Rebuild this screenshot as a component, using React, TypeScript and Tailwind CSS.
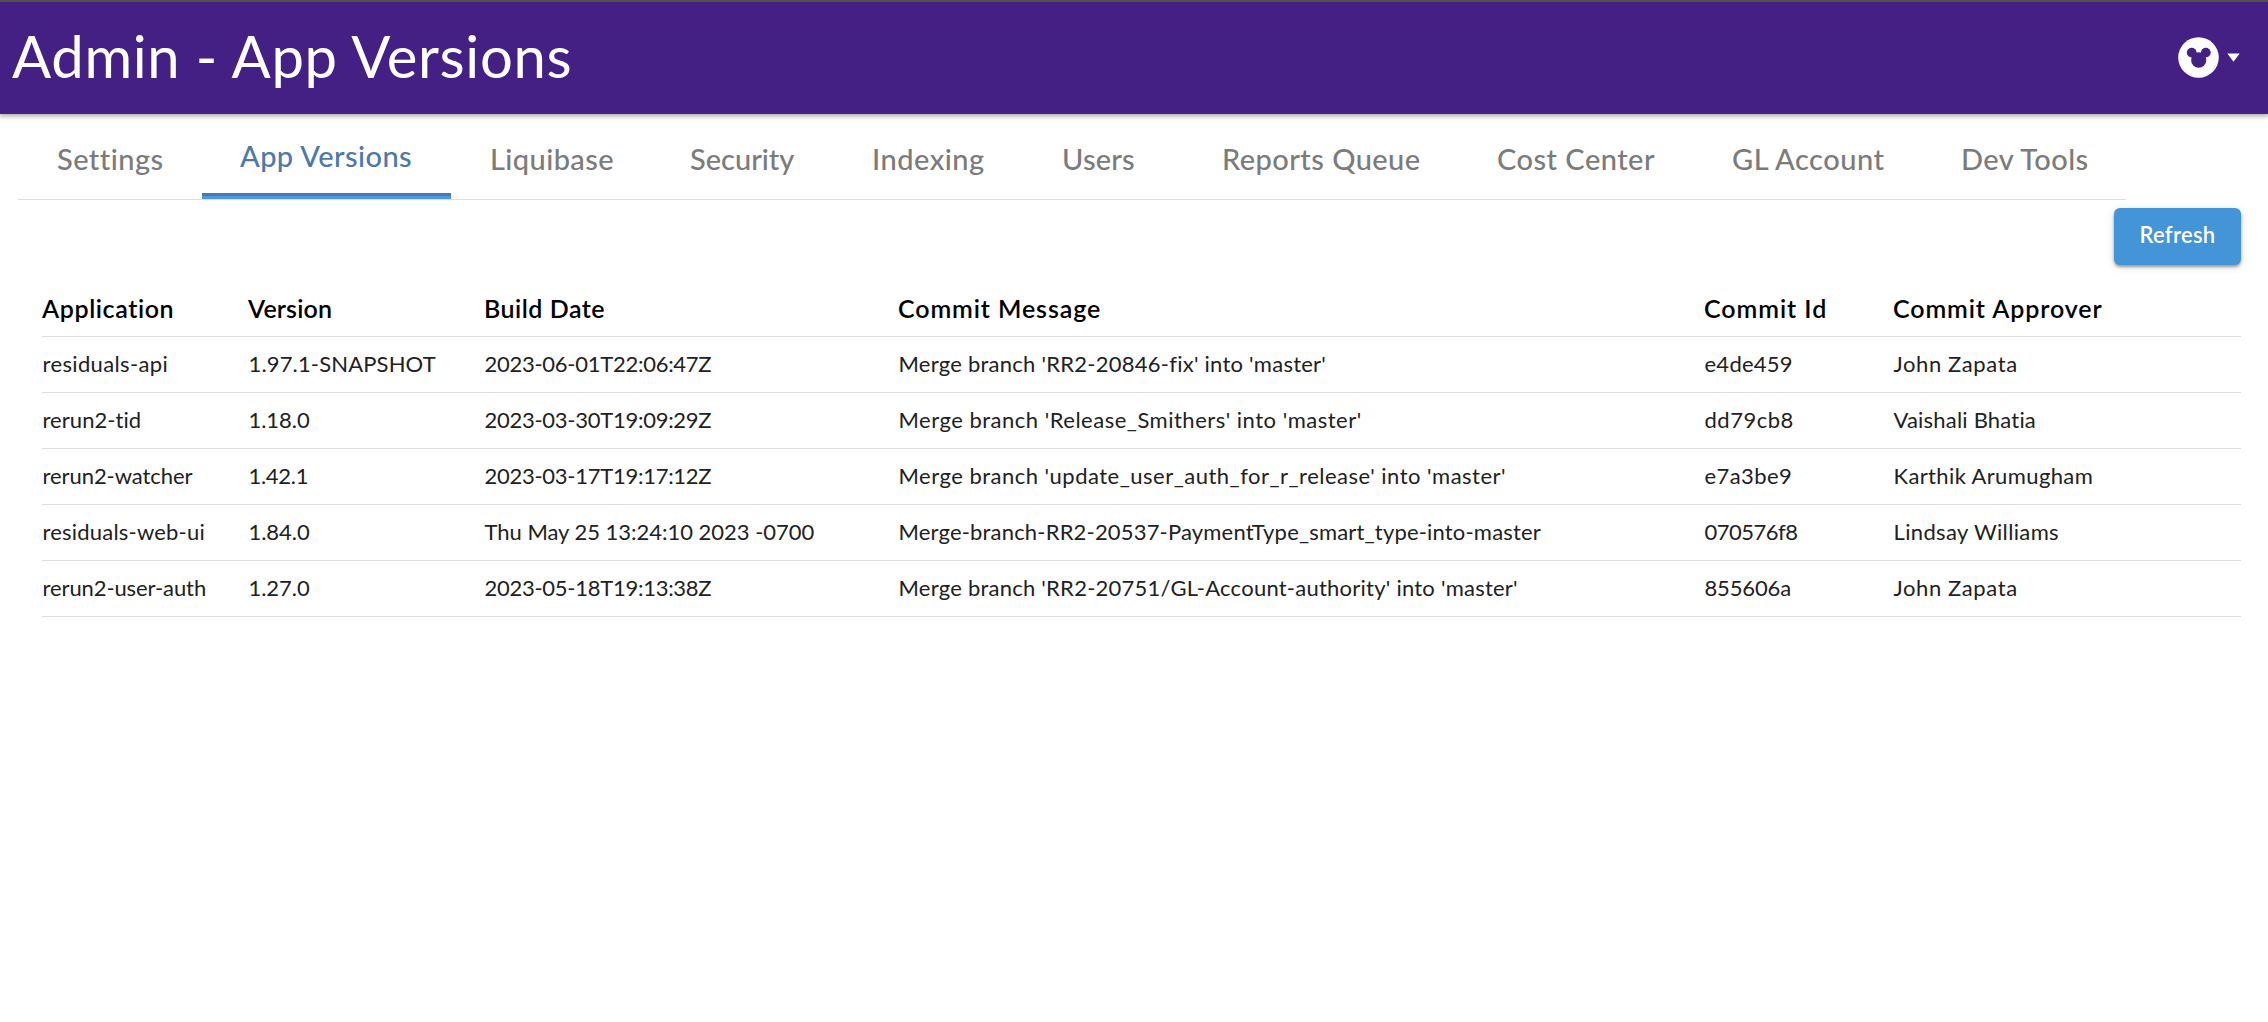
import React from "react";

type Cell = { text: string; spacing?: string };

const tabs = [
  { label: "Settings", className: "w-[184px] tracking-[0.45px]" },
  { label: "App Versions", className: "w-[249px] tracking-[0.42px]", active: true },
  { label: "Liquibase", className: "w-[200px] tracking-[0.42px]" },
  { label: "Security", className: "w-[182px] tracking-[0px]" },
  { label: "Indexing", className: "w-[190px] tracking-[0.5px]" },
  { label: "Users", className: "w-[160px] tracking-[0.2px]" },
  { label: "Reports Queue", className: "w-[275px] tracking-[0.45px]" },
  { label: "Cost Center", className: "w-[235px] tracking-[0.48px]" },
  { label: "GL Account", className: "w-[229px] tracking-[0.5px]" },
  { label: "Dev Tools", className: "w-[204px] tracking-[0.4px]" },
];

const columns: Cell[] = [
  { text: "Application", spacing: "tracking-[0.6px]" },
  { text: "Version", spacing: "tracking-[0.15px]" },
  { text: "Build Date", spacing: "tracking-[0.5px]" },
  { text: "Commit Message", spacing: "tracking-[0.9px]" },
  { text: "Commit Id", spacing: "tracking-[0.95px]" },
  { text: "Commit Approver", spacing: "tracking-[0.9px]" },
];

const rows: Cell[][] = [
  [
    { text: "residuals-api", spacing: "tracking-[0.36px]" },
    { text: "1.97.1-SNAPSHOT", spacing: "tracking-[0.15px]" },
    { text: "2023-06-01T22:06:47Z", spacing: "tracking-[-0.27px]" },
    { text: "Merge branch 'RR2-20846-fix' into 'master'", spacing: "tracking-[0.25px]" },
    { text: "e4de459", spacing: "tracking-[0.25px]" },
    { text: "John Zapata", spacing: "tracking-[0.6px]" },
  ],
  [
    { text: "rerun2-tid", spacing: "tracking-[0.06px]" },
    { text: "1.18.0", spacing: "tracking-[-0.05px]" },
    { text: "2023-03-30T19:09:29Z", spacing: "tracking-[-0.27px]" },
    { text: "Merge branch 'Release_Smithers' into 'master'", spacing: "tracking-[0.5px]" },
    { text: "dd79cb8", spacing: "tracking-[0.5px]" },
    { text: "Vaishali Bhatia", spacing: "tracking-[0.2px]" },
  ],
  [
    { text: "rerun2-watcher", spacing: "tracking-[-0.06px]" },
    { text: "1.42.1", spacing: "tracking-[-0.3px]" },
    { text: "2023-03-17T19:17:12Z", spacing: "tracking-[-0.27px]" },
    { text: "Merge branch 'update_user_auth_for_r_release' into 'master'", spacing: "tracking-[0.49px]" },
    { text: "e7a3be9", spacing: "tracking-[0.4px]" },
    { text: "Karthik Arumugham", spacing: "tracking-[0.38px]" },
  ],
  [
    { text: "residuals-web-ui", spacing: "tracking-[0.2px]" },
    { text: "1.84.0", spacing: "tracking-[-0.05px]" },
    { text: "Thu May 25 13:24:10 2023 -0700", spacing: "tracking-[-0.02px]" },
    { text: "Merge-branch-RR2-20537-PaymentType_smart_type-into-master", spacing: "tracking-[0.18px]" },
    { text: "070576f8", spacing: "tracking-[-0.5px]" },
    { text: "Lindsay Williams", spacing: "tracking-[0.36px]" },
  ],
  [
    { text: "rerun2-user-auth", spacing: "tracking-[-0.1px]" },
    { text: "1.27.0", spacing: "tracking-[-0.05px]" },
    { text: "2023-05-18T19:13:38Z", spacing: "tracking-[-0.27px]" },
    { text: "Merge branch 'RR2-20751/GL-Account-authority' into 'master'", spacing: "tracking-[0.24px]" },
    { text: "855606a", spacing: "tracking-[-0.15px]" },
    { text: "John Zapata", spacing: "tracking-[0.6px]" },
  ],
];

function Header() {
  return (
    <header className="relative flex h-[114px] items-center justify-between border-t-2 border-[#4f4f4f] bg-[#442085] pr-[28px] pl-[12px] shadow-[0_1px_5px_1px_rgba(0,0,0,0.35)]">
      <h1 className="pb-[5px] text-[58px] leading-[70px] tracking-[0.65px] text-white">
        Admin - App Versions
      </h1>
      <button className="flex items-center gap-[8px] pb-[2px]" aria-label="Account menu">
        <svg width="41" height="41" viewBox="0 0 41 41">
          <circle cx="20.5" cy="20.5" r="20.3" fill="#fff" />
          <g fill="#442085">
            <circle cx="13.7" cy="15.6" r="4.9" />
            <circle cx="27.8" cy="15.6" r="4.9" />
            <ellipse cx="20.7" cy="23" rx="7.6" ry="7.8" />
          </g>
        </svg>
        <svg width="13" height="9" viewBox="0 0 13 9" fill="#fff">
          <path d="M0.3 0.5H12.7L6.5 8.7Z" />
        </svg>
      </button>
    </header>
  );
}

function Tabs() {
  return (
    <nav className="ml-[18px] flex h-[86px] w-[2108px] border-b border-[#dedede] text-[29px] leading-[35px] font-medium">
      {tabs.map((tab) => (
        <div key={tab.label} className={tab.className}>
          {tab.active ? (
            <div className="flex h-full flex-col">
              <div className="flex-1 pt-[24px] pl-[38px] text-[#4c78ab]">{tab.label}</div>
              <div className="h-[3px] bg-[#5078a5]" />
              <div className="h-[3px] bg-[#4797ee]" />
            </div>
          ) : (
            <div className="pt-[27px] pl-[39px] text-[#7b7b7b]">{tab.label}</div>
          )}
        </div>
      ))}
    </nav>
  );
}

const rowGrid =
  "grid grid-cols-[206px_236px_414px_806px_189px_1fr] items-center border-b border-[#dedede] whitespace-nowrap";

function VersionsTable() {
  return (
    <section className="mr-[27px] ml-[42px]">
      <div className={`${rowGrid} h-[58px] text-[25px] leading-[30px] font-semibold text-black`}>
        {columns.map((column) => (
          <div key={column.text} className={column.spacing}>
            {column.text}
          </div>
        ))}
      </div>
      {rows.map((row) => (
        <div
          key={row[0].text}
          className={`${rowGrid} h-[56px] pb-[2px] text-[22px] leading-[28px] text-[#212121]`}
        >
          {row.map((cell, index) => (
            <div key={index} className={`${cell.spacing} pl-[0.5px]`}>
              {cell.text}
            </div>
          ))}
        </div>
      ))}
    </section>
  );
}

export default function App() {
  return (
    <div className="min-h-screen bg-white font-['Lato','Liberation_Sans',sans-serif]">
      <Header />
      <Tabs />
      <div className="flex h-[79px] justify-end pt-[8px] pr-[27px]">
        <button className="h-[57px] w-[127px] rounded-[6px] bg-[#4494d8] pb-[4px] text-[22px] font-semibold tracking-[0.3px] text-white shadow-[0_2px_3px_rgba(0,0,0,0.35),0_2px_10px_rgba(0,0,0,0.12)]">
          Refresh
        </button>
      </div>
      <VersionsTable />
    </div>
  );
}
